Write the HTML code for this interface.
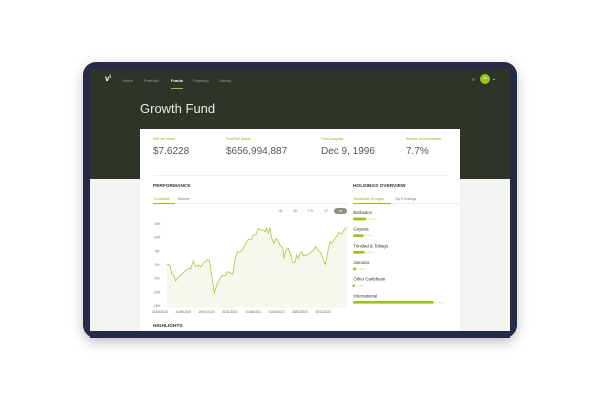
<!DOCTYPE html>
<html><head><style>
*{margin:0;padding:0;box-sizing:border-box}
body{width:600px;height:400px;background:#fff;position:relative;overflow:hidden;font-family:"Liberation Sans",sans-serif}
.a{position:absolute}
.frame{left:83px;top:62px;width:434px;height:276px;background:#272a47;border-radius:13px;box-shadow:0 4px 12px rgba(0,0,0,.25)}
.screen{left:90px;top:69px;width:420px;height:262px;background:#f4f4f2;overflow:hidden}
.hdr{left:0;top:0;width:420px;height:110px;background:#2c3527}
.nav{font-size:4px;color:#9aa08f;top:9px}
.lbl{font-size:3.4px;color:#8fb31b}
.val{font-size:10px;color:#555}
.sm{font-size:3.2px;color:#777}
.h{font-size:4.8px;font-weight:bold;color:#333}
</style></head><body>
<div class="a frame"></div>
<div class="a screen">
 <div class="a hdr"></div>
 <div class="a" style="left:15px;top:5px;color:#fff;font-size:8px;font-weight:bold">v<span style="font-size:5px;vertical-align:top">i</span></div>
 <div class="a nav" style="left:32px">Home</div>
 <div class="a nav" style="left:54px">Portfolio</div>
 <div class="a nav" style="left:81px;color:#fff;font-weight:bold">Funds</div>
 <div class="a" style="left:81px;top:19px;width:12px;height:1px;background:#9ab832"></div>
 <div class="a nav" style="left:103px">Planning</div>
 <div class="a nav" style="left:129px">Library</div>
 <div class="a" style="left:382px;top:9px;width:3px;height:3px;border:0.6px solid #666;border-radius:50%"></div>
 <div class="a" style="left:390px;top:5px;width:10px;height:10px;border-radius:50%;background:#9cc21c;color:#fff;font-size:2.5px;text-align:center;line-height:10px">AW</div>
 <div class="a" style="left:403px;top:9.5px;width:2px;height:1px;background:#aaa"></div>
 <div class="a" style="left:50px;top:32px;color:#e8ebe4;font-size:13px">Growth Fund</div>
 <div class="a" style="left:50px;top:60px;width:320px;height:210px;background:#fff"></div>
 <div class="a lbl" style="left:63px;top:68px">NAV per share</div>
 <div class="a lbl" style="left:136px;top:68px">Fund Net Assets</div>
 <div class="a lbl" style="left:231px;top:68px">Fund Inception</div>
 <div class="a lbl" style="left:316px;top:68px">Returns since inception</div>
 <div class="a val" style="left:63px;top:77px">$7.6228</div>
 <div class="a val" style="left:136px;top:77px">$656,994,887</div>
 <div class="a val" style="left:231px;top:77px">Dec 9, 1996</div>
 <div class="a val" style="left:316px;top:77px">7.7%</div>
 <div class="a" style="left:63px;top:106px;width:295px;height:0.5px;background:#eee"></div>
</div>
<div class="a h" style="left:153px;top:184px">PERFORMANCE</div>
<div class="a h" style="left:353px;top:184px">HOLDINGS OVERVIEW</div>
<div class="a sm" style="left:154px;top:197px;color:#8fb31b">Cumulative</div>
<div class="a sm" style="left:178px;top:197px">Discrete</div>
<div class="a" style="left:153px;top:203px;width:195px;height:0.5px;background:#eee"></div>
<div class="a" style="left:153px;top:203px;width:22px;height:1px;background:#9ab832"></div>
<div class="a sm" style="left:354px;top:197px;color:#8fb31b">Breakdown by region</div>
<div class="a sm" style="left:395px;top:197px">Top 5 Holdings</div>
<div class="a" style="left:353px;top:203px;width:107px;height:0.5px;background:#eee"></div>
<div class="a" style="left:353px;top:203px;width:38px;height:1px;background:#9ab832"></div>
<div class="a sm" style="left:278px;top:209px">1M</div>
<div class="a sm" style="left:293px;top:209px">3M</div>
<div class="a sm" style="left:307px;top:209px">YTD</div>
<div class="a sm" style="left:324px;top:209px">1Y</div>
<div class="a" style="left:334px;top:208px;width:13px;height:6px;border-radius:3px;background:#8c9480;color:#fff;font-size:3px;text-align:center;line-height:6px">All</div>
<svg class="a" style="left:140px;top:175px" width="320" height="160" viewBox="0 0 960 480">
<g font-family="Liberation Sans" font-size="9.5" fill="#666">
<text x="42" y="150">15%</text><text x="42" y="191">10%</text><text x="45" y="232">5%</text><text x="45" y="273">0%</text><text x="42" y="314">-5%</text><text x="39" y="355">-10%</text><text x="39" y="396">-15%</text>
<text x="36" y="414">31/08/2018</text><text x="106" y="414">31/05/2019</text><text x="176" y="414">29/02/2020</text><text x="246" y="414">30/11/2020</text><text x="316" y="414">31/08/2021</text><text x="386" y="414">31/05/2022</text><text x="456" y="414">28/02/2023</text><text x="526" y="414">30/11/2023</text>
</g>
<line x1="75" y1="396" x2="620" y2="396" stroke="#ddd"/>
<polygon fill="#f6f8ee" points="80,268 90,270 95,295 100,298 107,318 115,305 125,298 135,288 145,280 152,282 160,258 168,275 175,270 182,275 190,265 200,255 208,255 215,300 223,355 230,330 240,310 248,300 255,303 262,290 270,293 278,298 285,255 292,230 300,232 310,220 320,200 327,192 333,195 340,180 348,178 355,160 362,165 370,165 375,170 380,160 385,175 390,158 395,190 402,205 408,190 415,198 420,210 428,218 432,250 438,225 445,220 452,240 458,262 465,262 470,240 475,250 480,235 485,230 490,242 500,240 510,235 520,225 527,215 533,225 540,230 545,240 550,255 556,268 560,250 565,220 570,200 575,205 580,198 585,190 590,183 597,172 605,178 612,165 620,157 620,396 80,396"/>
<polyline fill="none" stroke="#a8c83a" stroke-width="2.4" points="80,268 90,270 95,295 100,298 107,318 115,305 125,298 135,288 145,280 152,282 160,258 168,275 175,270 182,275 190,265 200,255 208,255 215,300 223,355 230,330 240,310 248,300 255,303 262,290 270,293 278,298 285,255 292,230 300,232 310,220 320,200 327,192 333,195 340,180 348,178 355,160 362,165 370,165 375,170 380,160 385,175 390,158 395,190 402,205 408,190 415,198 420,210 428,218 432,250 438,225 445,220 452,240 458,262 465,262 470,240 475,250 480,235 485,230 490,242 500,240 510,235 520,225 527,215 533,225 540,230 545,240 550,255 556,268 560,250 565,220 570,200 575,205 580,198 585,190 590,183 597,172 605,178 612,165 620,157"/>
<g font-family="Liberation Sans" font-size="13" fill="#333">
<text x="640" y="117">Barbados</text><text x="640" y="167">Guyana</text><text x="640" y="217">Trinidad &amp; Tobago</text><text x="640" y="267">Jamaica</text><text x="640" y="317">Other Caribbean</text><text x="640" y="367">International</text>
</g>
<g stroke="#9cc21c" stroke-width="8" stroke-linecap="round">
<line x1="643" y1="132" x2="675" y2="132"/><line x1="643" y1="182" x2="667" y2="182"/><line x1="643" y1="232" x2="670" y2="232"/><line x1="643" y1="282" x2="645" y2="282"/><line x1="641" y1="332" x2="641" y2="332"/><line x1="643" y1="382" x2="877" y2="382"/>
</g>
<g font-family="Liberation Sans" font-size="8" fill="#c5d98a">
<text x="682" y="135">13.00%</text><text x="674" y="185">8.00%</text><text x="677" y="235">9.00%</text><text x="653" y="285">3.00%</text><text x="648" y="335">1.00%</text><text x="884" y="385">53.00%</text>
</g>
</svg>
<div class="a h" style="left:153px;top:324px">HIGHLIGHTS</div>
<div class="a" style="left:90px;top:331px;width:420px;height:7px;background:#272a47"></div>
</body></html>
